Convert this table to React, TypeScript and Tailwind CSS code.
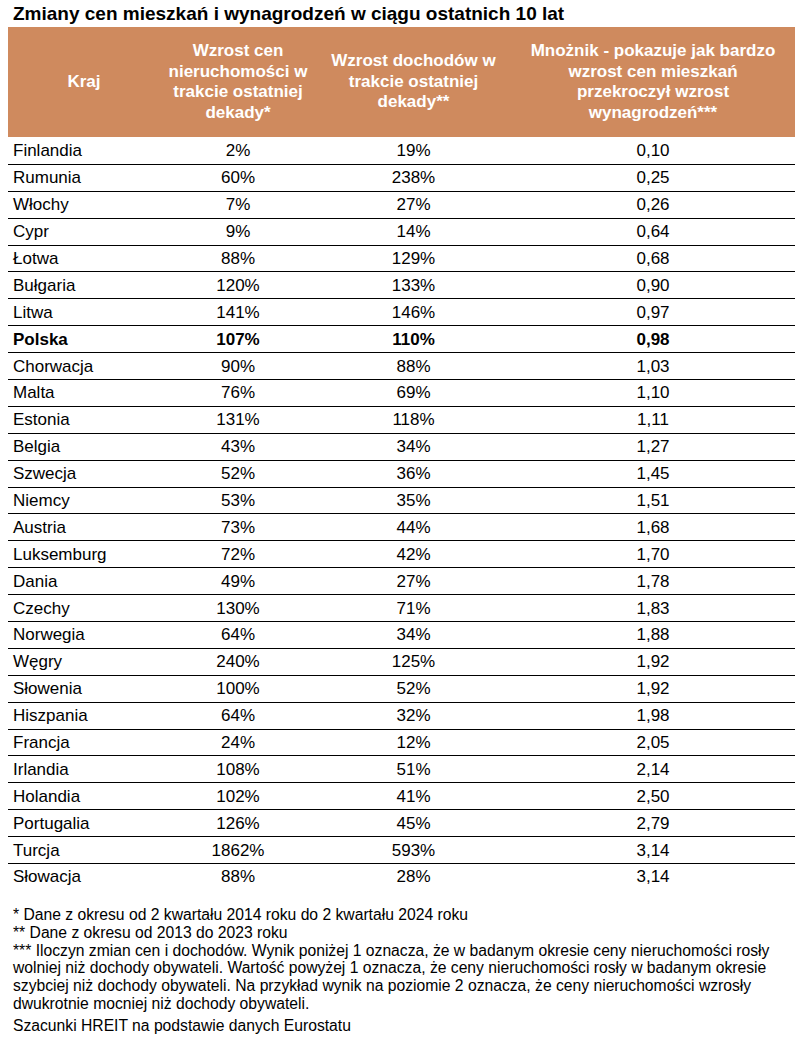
import React from 'react';

interface Row {
    country: string;
    prices: string;
    income: string;
    ratio: string;
    bold?: boolean;
}

const ROWS: Row[] = [
    { country: 'Finlandia', prices: '2%', income: '19%', ratio: '0,10' },
    { country: 'Rumunia', prices: '60%', income: '238%', ratio: '0,25' },
    { country: 'Włochy', prices: '7%', income: '27%', ratio: '0,26' },
    { country: 'Cypr', prices: '9%', income: '14%', ratio: '0,64' },
    { country: 'Łotwa', prices: '88%', income: '129%', ratio: '0,68' },
    { country: 'Bułgaria', prices: '120%', income: '133%', ratio: '0,90' },
    { country: 'Litwa', prices: '141%', income: '146%', ratio: '0,97' },
    { country: 'Polska', prices: '107%', income: '110%', ratio: '0,98', bold: true },
    { country: 'Chorwacja', prices: '90%', income: '88%', ratio: '1,03' },
    { country: 'Malta', prices: '76%', income: '69%', ratio: '1,10' },
    { country: 'Estonia', prices: '131%', income: '118%', ratio: '1,11' },
    { country: 'Belgia', prices: '43%', income: '34%', ratio: '1,27' },
    { country: 'Szwecja', prices: '52%', income: '36%', ratio: '1,45' },
    { country: 'Niemcy', prices: '53%', income: '35%', ratio: '1,51' },
    { country: 'Austria', prices: '73%', income: '44%', ratio: '1,68' },
    { country: 'Luksemburg', prices: '72%', income: '42%', ratio: '1,70' },
    { country: 'Dania', prices: '49%', income: '27%', ratio: '1,78' },
    { country: 'Czechy', prices: '130%', income: '71%', ratio: '1,83' },
    { country: 'Norwegia', prices: '64%', income: '34%', ratio: '1,88' },
    { country: 'Węgry', prices: '240%', income: '125%', ratio: '1,92' },
    { country: 'Słowenia', prices: '100%', income: '52%', ratio: '1,92' },
    { country: 'Hiszpania', prices: '64%', income: '32%', ratio: '1,98' },
    { country: 'Francja', prices: '24%', income: '12%', ratio: '2,05' },
    { country: 'Irlandia', prices: '108%', income: '51%', ratio: '2,14' },
    { country: 'Holandia', prices: '102%', income: '41%', ratio: '2,50' },
    { country: 'Portugalia', prices: '126%', income: '45%', ratio: '2,79' },
    { country: 'Turcja', prices: '1862%', income: '593%', ratio: '3,14' },
    { country: 'Słowacja', prices: '88%', income: '28%', ratio: '3,14' },
];

// footnotes keep the original line breaks
const NOTES: string[] = [
    '* Dane z okresu od 2 kwartału 2014 roku do 2 kwartału 2024 roku',
    '** Dane z okresu od 2013 do 2023 roku',
    '*** Iloczyn zmian cen i dochodów. Wynik poniżej 1 oznacza, że w badanym okresie ceny nieruchomości rosły',
    'wolniej niż dochody obywateli. Wartość powyżej 1 oznacza, że ceny nieruchomości rosły w badanym okresie',
    'szybciej niż dochody obywateli. Na przykład wynik na poziomie 2 oznacza, że ceny nieruchomości wzrosły',
    'dwukrotnie mocniej niż dochody obywateli.',
];

const COLS = 'grid grid-cols-[152px_156px_195px_284px]';

const App: React.FC = () => (
    <div className="w-[805px] h-[1041px] bg-white text-black font-['Liberation_Sans',Arial,sans-serif] overflow-hidden">
        {/* Title */}
        <div className="h-[27px] pl-[13px] flex items-center text-[19px] font-bold leading-none">
            Zmiany cen mieszkań i wynagrodzeń w ciągu ostatnich 10 lat
        </div>

        <div className="mx-[8px] w-[787px]">
            {/* Header */}
            <div className={`${COLS} h-[110px] bg-[#CF8A5E] text-white font-bold text-[17px] leading-[20.5px] text-center items-center`}>
                <div>Kraj</div>
                <div>
                    Wzrost cen<br />nieruchomości w<br />trakcie ostatniej<br />dekady*
                </div>
                <div>
                    Wzrost dochodów w<br />trakcie ostatniej<br />dekady**
                </div>
                <div>
                    Mnożnik - pokazuje jak bardzo<br />wzrost cen mieszkań<br />przekroczył wzrost<br />wynagrodzeń***
                </div>
            </div>

            {/* Rows */}
            {ROWS.map((row, i) => (
                <div
                    key={row.country}
                    className={`${COLS} h-[26.9px] items-center text-[17px] leading-none ${i > 0 ? 'border-t border-black' : ''} ${row.bold ? 'font-bold' : ''}`}
                >
                    <div className="pl-[5px]">{row.country}</div>
                    <div className="text-center">{row.prices}</div>
                    <div className="text-center">{row.income}</div>
                    <div className="text-center">{row.ratio}</div>
                </div>
            ))}
        </div>

        {/* Notes */}
        <div className="pl-[13px] pt-[16px] text-[16px] leading-[17.8px]">
            {NOTES.map((line) => (
                <div key={line} className="whitespace-nowrap origin-left scale-x-[0.98]">
                    {line}
                </div>
            ))}
            <div className="mt-[4.5px] whitespace-nowrap origin-left scale-x-[0.98]">
                Szacunki HREIT na podstawie danych Eurostatu
            </div>
        </div>
    </div>
);

export default App;
